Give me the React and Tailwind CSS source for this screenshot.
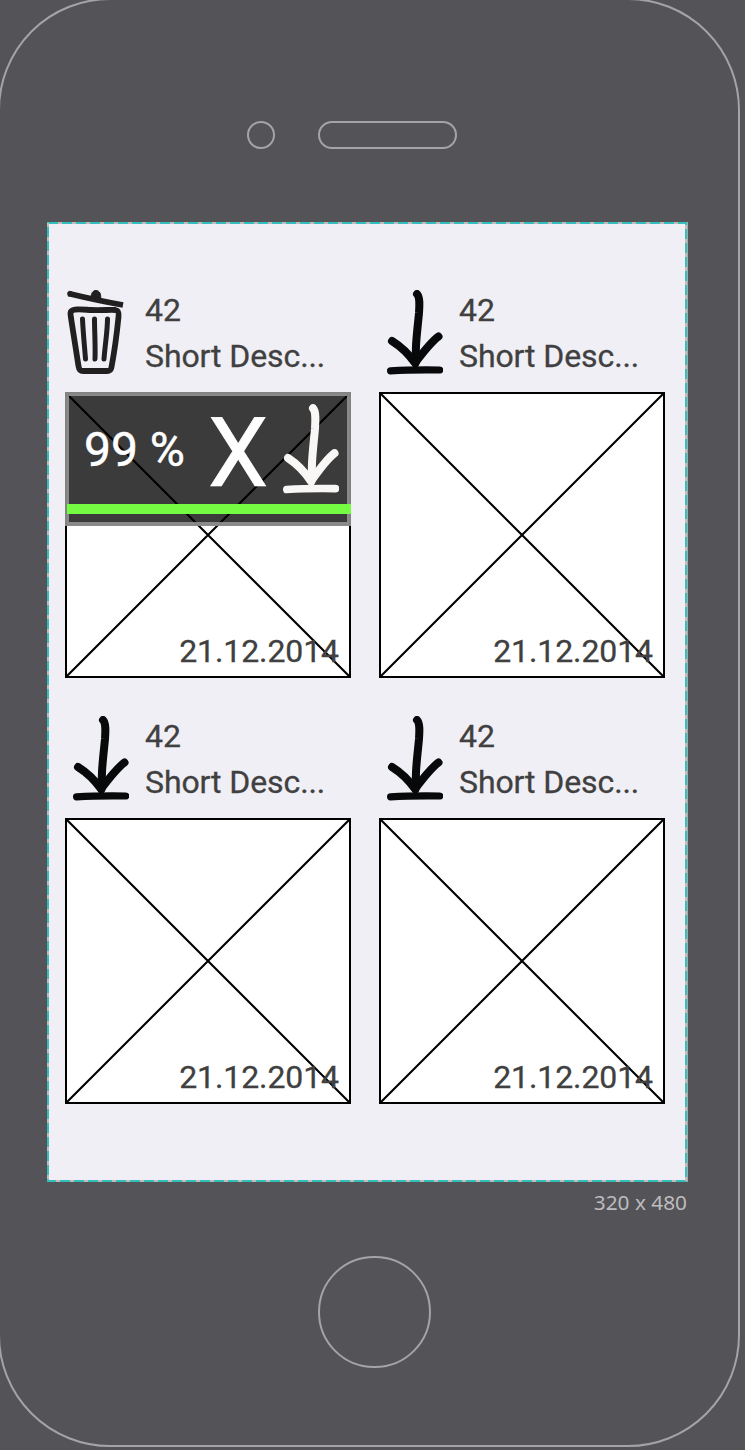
const edgeX = 'absolute inset-x-0 h-[2px] bg-[repeating-linear-gradient(to_right,#34bfbd_0px,#34bfbd_10px,#c0bcbc_10px,#c0bcbc_14px)]';
const edgeY = 'absolute inset-y-0 w-[2px] bg-[repeating-linear-gradient(to_bottom,#c0bcbc_0px,#c0bcbc_4px,#34bfbd_4px,#34bfbd_14px)] bg-size-[2px_14px]';

function Arrow({ className }) {
  return (
    <svg className={className} viewBox="0 0 56 86" preserveAspectRatio="none" fill="none" stroke="currentColor" strokeLinecap="round" strokeLinejoin="round">
      <path d="M30 4C33 7 32.500 15 32 23C31 34 29.500 45 29 56L28.500 73" strokeWidth="8" />
      <path d="M5 51C13 56 21 63 28 73C34 65 44 52 51.500 46.500" strokeWidth="8" />
      <path d="M24 68L34 68L30 77H27Z" fill="currentColor" strokeWidth="1" />
      <path d="M3.600 80.800C18 80 38 79.800 52.700 80" strokeWidth="7.200" />
    </svg>
  );
}

function Trash() {
  return (
    <svg className="ml-px -mt-px text-[#221f20]" width="58" height="86" viewBox="0 0 58 86" fill="none" stroke="currentColor" strokeLinecap="butt" strokeLinejoin="round">
      <path d="M2.500 4.500C19 8.500 37 12.500 57 16" strokeWidth="5.800" />
      <circle cx="4" cy="4.800" r="2.800" fill="currentColor" stroke="none" />
      <path d="M25 9C25 4 27 1.500 30 1.500C33.500 1.500 35.500 5 34.500 11Z" fill="currentColor" strokeWidth="1" />
      <path d="M5.500 22C8 19.500 16 20.500 25 21C35 21.500 45 20.500 49.500 21C53 21.500 53 24 52.500 28C51 43 48 65 45.500 78C45 81.500 44 82 41 82H17C14 82 13 80.500 12.500 77C10 61 7 42 5 29C4.500 25 4 23 5.500 22Z" strokeWidth="5.800" />
      <path d="M16.500 30C17 42 18.500 57 19.500 70M28.500 30C28.500 43 29.500 56 29 70M41.500 30C41.500 42 39 56 38 70" strokeLinecap="round" strokeWidth="5" />
    </svg>
  );
}

function DownloadOverlay() {
  return (
    <div className="absolute inset-x-0 top-0 h-[134px] border-4 border-[rgba(151,151,151,0.87)] bg-black/77 text-white">
      <div className="flex h-full items-start whitespace-nowrap">
        <span className="mt-[26px] ml-[15px] w-[124px] text-[48px] leading-[56px] [-webkit-text-stroke:0.5px]">99 %</span>
        <span className="mt-px w-[75px] text-[96px] leading-[112px] [-webkit-text-stroke:0.7px]">X</span>
        <Arrow className="mt-[8px] h-[91px] w-[56px] shrink-0 text-[#f8f7f5]" />
      </div>
      <div className="absolute top-[108px] -right-1 -left-0.5 h-[10px] bg-[#75fb42]" />
    </div>
  );
}

function Card({ downloading }) {
  return (
    <article className="h-[388px] w-[286px]">
      <header className="flex h-[102px]">
        <div className={downloading ? 'w-[80px]' : 'w-[80px] pl-[8px]'}>
          {downloading ? <Trash /> : <Arrow className="h-[86px] w-[56px] text-[#08090b]" />}
        </div>
        <div className="-mt-[3px] text-[32px] leading-[46px] tracking-[-0.1px] whitespace-nowrap text-[#404040] [-webkit-text-stroke:0.3px]">
          <p>42</p>
          <p>Short Desc...</p>
        </div>
      </header>
      <div className="relative flex h-[286px] items-end justify-end border-2 border-black bg-white">
        <svg className="absolute inset-0" width="282" height="282" viewBox="0 0 282 282" fill="none" stroke="black" strokeWidth="2.100">
          <path d="M0 0L282 282M282 0L0 282" />
        </svg>
        <span className="relative mr-[10px] mb-[6px] text-[32px] leading-[38px] tracking-[-0.1px] text-[#404040] [-webkit-text-stroke:0.3px]">21.12.2014</span>
        {downloading && (
          <div className="absolute -inset-[2px]">
            <DownloadOverlay />
          </div>
        )}
      </div>
    </article>
  );
}

export default function App() {
  return (
    <div className="h-[1450px] w-[745px] overflow-hidden bg-[#545358] font-['Roboto',sans-serif]">
      <div className="-mt-[2px] -ml-[2px] flex h-[1449px] w-[742px] flex-col rounded-[112px] border-2 border-[#a4a3a6]">
        <div className="flex h-[222px] items-start pt-[121px] pl-[247px]">
          <div className="size-[28px] rounded-full border-2 border-[#a4a3a6]" />
          <div className="ml-[43px] h-[28px] w-[139px] rounded-full border-2 border-[#a4a3a6]" />
        </div>
        <main className="relative ml-[47px] h-[960px] w-[641px] shrink-0 bg-[#f0eff5] pt-[68px] pl-[18px]">
          <div className="grid grid-cols-[286px_286px] gap-x-[28px] gap-y-[38px]">
            <Card downloading />
            <Card />
            <Card />
            <Card />
          </div>
          <div className={`${edgeX} top-0 bg-size-[14px_2px] bg-position-[1px_0]`} />
          <div className={`${edgeX} bottom-0 bg-size-[14px_2px] bg-position-[-1px_0]`} />
          <div className={`${edgeY} left-0 bg-position-[0_1px]`} />
          <div className={`${edgeY} right-px bg-position-[0_3px]`} />
          <div className="absolute inset-y-0 right-0 w-px bg-[#aaa9ac]" />
        </main>
        <p className="mt-[5px] pr-[51px] text-right font-['Noto_Sans',sans-serif] text-[20.8px] leading-[30px] text-[#bdbcbe]">320 x 480</p>
        <div className="mt-[39px] ml-[318px] h-[112px] w-[113px] shrink-0 rounded-full border-2 border-[#a4a3a6]" />
      </div>
    </div>
  );
}
